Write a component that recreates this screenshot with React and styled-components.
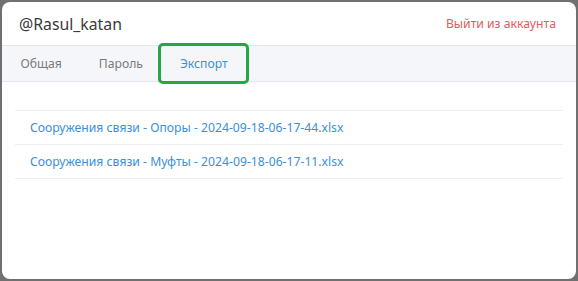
import React from 'react';
import styled, { createGlobalStyle } from 'styled-components';

const Global = createGlobalStyle`
  html, body {
    margin: 0;
    padding: 0;
    background: #707070;
  }
  body {
    font-family: "Noto Sans", "Open Sans", sans-serif;
  }
`;

// Modal card sitting on the dimmed backdrop
const Card = styled.div`
  margin: 2px;
  width: 574px;
  height: 277px;
  background: #fff;
  border-radius: 8px;
  box-sizing: border-box;
  overflow: hidden;
  display: flex;
  flex-direction: column;
`;

const Header = styled.div`
  height: 43px;
  display: flex;
  align-items: center;
  justify-content: space-between;
  padding: 0 20px 0 17px;
  border-bottom: 1px solid #e4e6eb;
`;

const User = styled.div`
  font-size: 15.8px;
  color: #3a3a3a;
`;

const Logout = styled.a`
  font-size: 12.2px;
  color: #e05b5d;
  text-decoration: none;
  cursor: pointer;
`;

const TabBar = styled.div`
  height: 35px;
  display: flex;
  background: #f5f6fa;
  border-bottom: 1px solid #e4e6eb;
`;

const Tab = styled.div`
  display: flex;
  align-items: center;
  padding: 0 18.5px;
  font-size: 12.2px;
  color: ${({ active }) => (active ? '#3d8fd8' : '#7a7a7a')};
  outline: ${({ active }) => (active ? '3px solid #24a847' : 'none')};
  border-radius: 2px;
  cursor: pointer;
`;

const Files = styled.div`
  margin: 28px 13px 0;
`;

const Row = styled.div`
  height: 33px;
  display: flex;
  align-items: center;
  padding-left: 15px;
  border-top: 1px solid #eceef1;
  &:last-child {
    border-bottom: 1px solid #eceef1;
  }
`;

const FileLink = styled.a`
  font-size: 12.2px;
  color: #3d8fd8;
  text-decoration: none;
  cursor: pointer;
`;

const files = [
  'Сооружения связи - Опоры - 2024-09-18-06-17-44.xlsx',
  'Сооружения связи - Муфты - 2024-09-18-06-17-11.xlsx',
];

export default function App() {
  return (
    <>
      <Global />
      <Card>
        <Header>
          <User>@Rasul_katan</User>
          <Logout>Выйти из аккаунта</Logout>
        </Header>
        <TabBar>
          <Tab>Общая</Tab>
          <Tab>Пароль</Tab>
          <Tab active>Экспорт</Tab>
        </TabBar>
        <Files>
          {files.map((f) => (
            <Row key={f}>
              <FileLink>{f}</FileLink>
            </Row>
          ))}
        </Files>
      </Card>
    </>
  );
}
